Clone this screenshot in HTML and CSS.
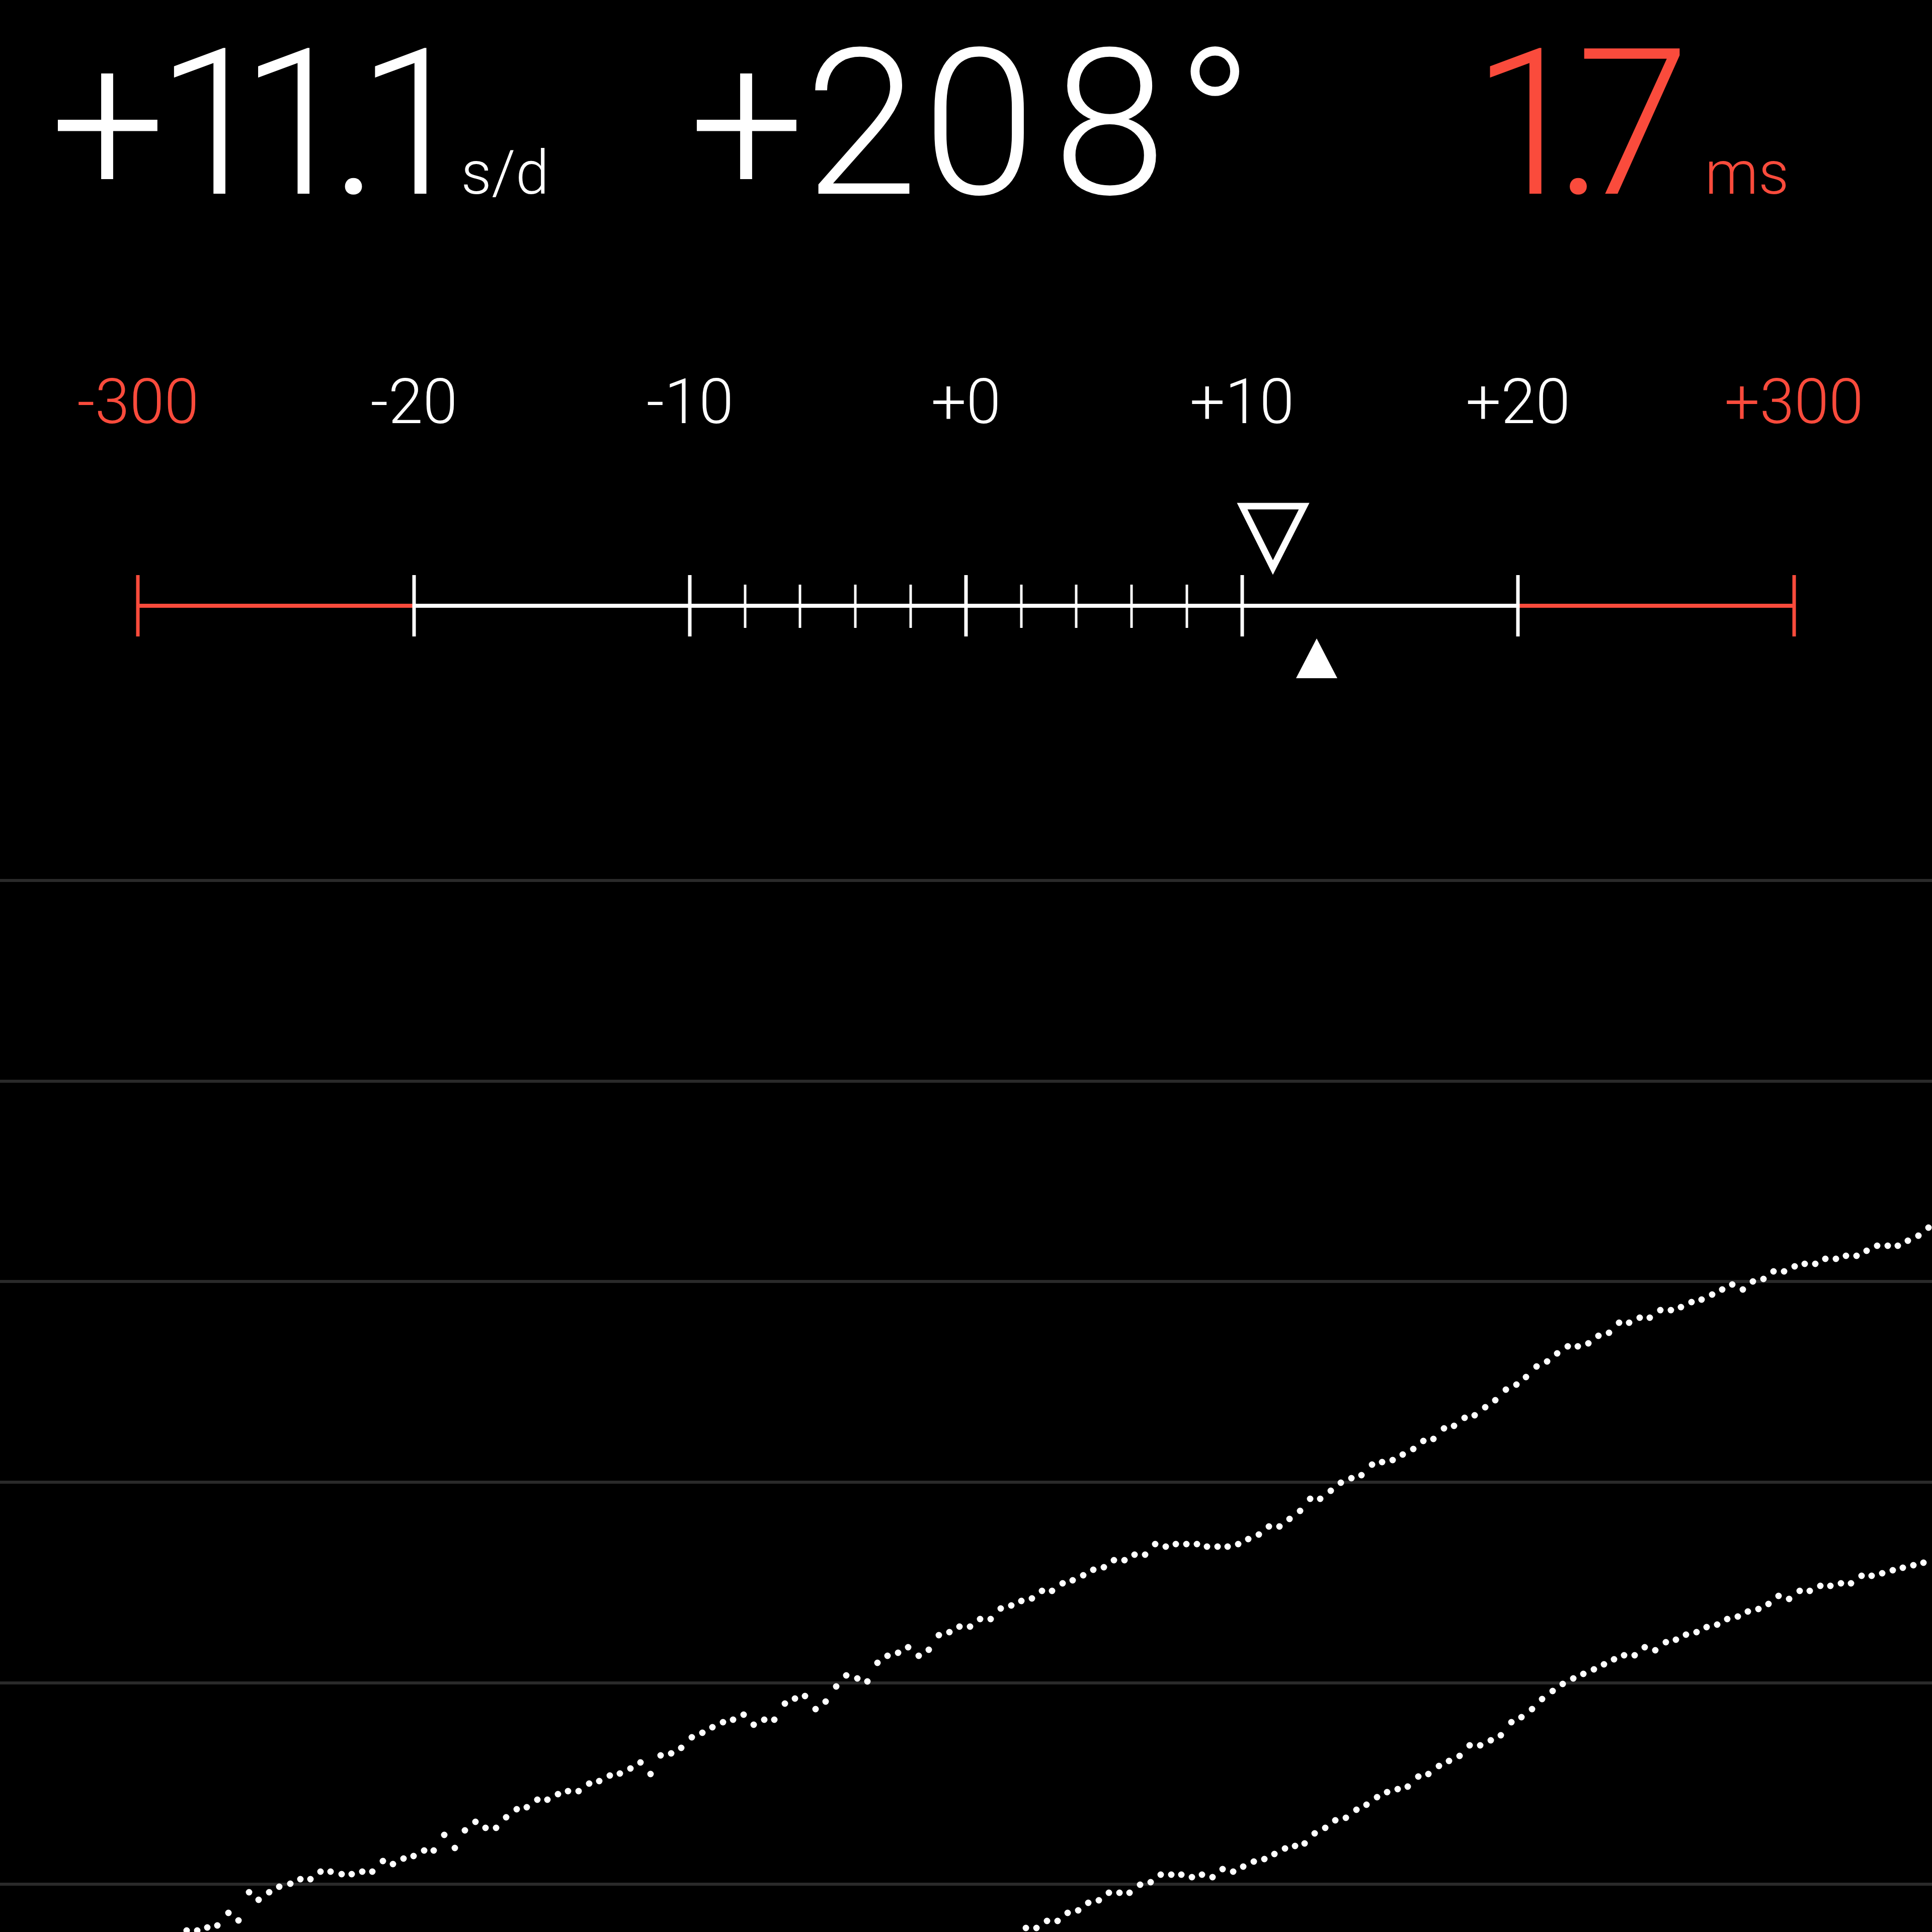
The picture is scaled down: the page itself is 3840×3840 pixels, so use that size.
FILE: index.html
```html
<!DOCTYPE html>
<html lang="en">
<head>
<meta charset="utf-8">
<title>Timegrapher</title>
<link rel="stylesheet" href="styles.css">
</head>
<body>
<main class="screen">
  <section class="readouts">
    <div class="readout rate"><span class="num"><span class="p">+</span><span class="a">1</span><span class="b">1</span><span class="d">.</span><span class="e">1</span></span><span class="unit">s/d</span></div>
    <div class="readout amp"><span class="num">+<span class="a">2</span><span class="b">0</span><span class="c">8</span>°</span></div>
    <div class="readout beat warn"><span class="num"><span class="a">1</span><span class="d">.</span>7</span><span class="unit">ms</span></div>
  </section>
  <section class="labels">
    <span class="lbl warn">-300</span>
    <span class="lbl">-20</span>
    <span class="lbl">-10</span>
    <span class="lbl">+0</span>
    <span class="lbl">+10</span>
    <span class="lbl">+20</span>
    <span class="lbl warn">+300</span>
  </section>
  <svg class="ruler" viewBox="0 990 3840 380" xmlns="http://www.w3.org/2000/svg">
    <g class="axis">
      <line class="red" x1="274" y1="1204" x2="823" y2="1204"/>
      <line class="white" x1="823" y1="1204" x2="3017" y2="1204"/>
      <line class="red" x1="3017" y1="1204" x2="3566" y2="1204"/>
    </g>
    <g class="big-ticks">
      <line class="red" x1="274" y1="1143" x2="274" y2="1265"/>
      <line class="white" x1="823" y1="1143" x2="823" y2="1265"/>
      <line class="white" x1="1371" y1="1143" x2="1371" y2="1265"/>
      <line class="white" x1="1920" y1="1143" x2="1920" y2="1265"/>
      <line class="white" x1="2469" y1="1143" x2="2469" y2="1265"/>
      <line class="white" x1="3017" y1="1143" x2="3017" y2="1265"/>
      <line class="red" x1="3566" y1="1143" x2="3566" y2="1265"/>
    </g>
    <g class="small-ticks">
      <line x1="1481" y1="1162" x2="1481" y2="1248"/>
      <line x1="1590" y1="1162" x2="1590" y2="1248"/>
      <line x1="1700" y1="1162" x2="1700" y2="1248"/>
      <line x1="1810" y1="1162" x2="1810" y2="1248"/>
      <line x1="2030" y1="1162" x2="2030" y2="1248"/>
      <line x1="2139" y1="1162" x2="2139" y2="1248"/>
      <line x1="2249" y1="1162" x2="2249" y2="1248"/>
      <line x1="2359" y1="1162" x2="2359" y2="1248"/>
    </g>
    <polygon class="marker-hollow" points="2469,1006 2592,1006 2530,1128"/>
    <polygon class="marker-solid" points="2576,1348 2658,1348 2617,1269"/>
  </svg>
  <svg class="chart" viewBox="0 1700 3840 2140" xmlns="http://www.w3.org/2000/svg">
    <g class="grid">
      <line x1="0" y1="1750" x2="3840" y2="1750"/>
      <line x1="0" y1="2149" x2="3840" y2="2149"/>
      <line x1="0" y1="2547" x2="3840" y2="2547"/>
      <line x1="0" y1="2946" x2="3840" y2="2946"/>
      <line x1="0" y1="3345" x2="3840" y2="3345"/>
      <line x1="0" y1="3745" x2="3840" y2="3745"/>
    </g>
    <path class="dots" d="M371 3837h0M392 3837h0M412 3831h0M432 3827h0M454 3802h0M474 3817h0M495 3761h0M514 3776h0M535 3761h0M555 3750h0M577 3744h0M597 3735h0M617 3735h0M637 3720h0M657 3720h0M679 3725h0M699 3725h0M720 3720h0M740 3720h0M761 3699h0M781 3705h0M802 3694h0M822 3689h0M843 3678h0M862 3678h0M883 3647h0M904 3673h0M924 3638h0M945 3621h0M965 3633h0M986 3633h0M1006 3612h0M1027 3596h0M1047 3592h0M1068 3577h0M1088 3577h0M1109 3566h0M1129 3560h0M1150 3560h0M1171 3545h0M1191 3540h0M1212 3529h0M1232 3525h0M1253 3515h0M1273 3503h0M1293 3526h0M1313 3489h0M1334 3485h0M1354 3474h0M1375 3453h0M1396 3444h0M1416 3433h0M1437 3423h0M1457 3418h0M1478 3408h0M1498 3428h0M1519 3418h0M1539 3418h0M1560 3386h0M1580 3376h0M1600 3371h0M1621 3397h0M1641 3382h0M1662 3352h0M1682 3330h0M1704 3336h0M1724 3342h0M1744 3305h0M1764 3291h0M1785 3285h0M1805 3274h0M1826 3291h0M1846 3279h0M1866 3250h0M1887 3244h0M1907 3233h0M1928 3233h0M1948 3218h0M1969 3218h0M1989 3197h0M2010 3191h0M2030 3182h0M2051 3177h0M2071 3162h0M2091 3162h0M2112 3147h0M2132 3141h0M2153 3131h0M2173 3120h0M2194 3115h0M2214 3101h0M2235 3101h0M2255 3090h0M2276 3090h0M2296 3069h0M2317 3074h0M2337 3069h0M2358 3069h0M2379 3069h0M2399 3074h0M2420 3074h0M2440 3074h0M2461 3069h0M2481 3059h0M2502 3050h0M2522 3034h0M2543 3034h0M2563 3019h0M2584 3003h0M2604 2979h0M2624 2979h0M2645 2963h0M2665 2947h0M2686 2938h0M2706 2932h0M2727 2911h0M2747 2906h0M2768 2902h0M2788 2891h0M2809 2880h0M2829 2864h0M2849 2860h0M2870 2839h0M2890 2834h0M2911 2818h0M2931 2813h0M2952 2797h0M2972 2783h0M2993 2762h0M3014 2752h0M3033 2737h0M3054 2716h0M3075 2706h0M3095 2690h0M3116 2676h0M3136 2676h0M3157 2670h0M3177 2655h0M3198 2649h0M3218 2629h0M3238 2629h0M3259 2619h0M3279 2619h0M3300 2604h0M3321 2604h0M3341 2598h0M3362 2588h0M3382 2583h0M3403 2573h0M3423 2563h0M3443 2553h0M3464 2563h0M3484 2547h0M3505 2542h0M3525 2527h0M3546 2527h0M3567 2517h0M3587 2512h0M3608 2512h0M3628 2502h0M3649 2502h0M3669 2496h0M3690 2496h0M3710 2486h0M3731 2476h0M3752 2476h0M3772 2476h0M3792 2466h0M3813 2456h0M3833 2440h0"/>
    <path class="dots" d="M2039 3832h0M2060 3832h0M2081 3818h0M2102 3818h0M2122 3802h0M2143 3797h0M2163 3782h0M2184 3777h0M2204 3762h0M2225 3762h0M2245 3762h0M2266 3746h0M2287 3741h0M2307 3726h0M2328 3726h0M2348 3726h0M2369 3731h0M2389 3726h0M2410 3731h0M2430 3715h0M2451 3720h0M2471 3710h0M2492 3700h0M2513 3695h0M2533 3685h0M2554 3674h0M2574 3669h0M2593 3664h0M2613 3644h0M2634 3633h0M2654 3618h0M2675 3613h0M2696 3597h0M2716 3587h0M2737 3572h0M2757 3562h0M2778 3556h0M2798 3551h0M2819 3531h0M2839 3526h0M2860 3510h0M2880 3500h0M2901 3490h0M2921 3469h0M2942 3469h0M2963 3459h0M2983 3449h0M3004 3423h0M3024 3413h0M3045 3397h0M3065 3377h0M3086 3361h0M3106 3347h0M3127 3336h0M3147 3327h0M3168 3318h0M3188 3308h0M3208 3298h0M3228 3290h0M3249 3290h0M3269 3274h0M3290 3280h0M3311 3264h0M3331 3259h0M3351 3249h0M3372 3244h0M3392 3234h0M3413 3229h0M3433 3218h0M3454 3213h0M3474 3203h0M3495 3198h0M3515 3188h0M3535 3172h0M3556 3178h0M3577 3162h0M3597 3162h0M3618 3152h0M3638 3152h0M3659 3147h0M3679 3147h0M3700 3132h0M3720 3132h0M3741 3127h0M3762 3121h0M3782 3116h0M3803 3111h0M3823 3106h0"/>
  </svg>
</main>
</body>
</html>
```

FILE: styles.css
```css
html, body {
  margin: 0;
  padding: 0;
  background: #000;
}

.screen {
  width: 3840px;
  height: 3840px;
  overflow: hidden;
  display: flex;
  flex-direction: column;
  background: #000;
  color: #fff;
  font-family: Roboto, "Liberation Sans", sans-serif;
}

.warn {
  color: #fa4b3c;
}

/* Top readouts */
.readouts {
  flex: none;
  height: 740px;
  box-sizing: border-box;
  padding: 43px 0 0 100px;
  display: grid;
  grid-template-columns: 1270px 1556px auto;
  align-items: baseline;
  align-content: start;
}

.readout {
  white-space: nowrap;
}

.num {
  font-size: 406px;
  font-weight: 300;
  line-height: 406px;
}

.unit {
  font-size: 120px;
  font-weight: 300;
  margin-left: 30px;
}

/* per-glyph spacing so the proportional figures sit as in the original */
.rate .p { letter-spacing: -19px; }
.rate .a { letter-spacing: -58px; }
.rate .b { letter-spacing: -46px; }
.rate .d { letter-spacing: -44px; }
.rate .e { letter-spacing: -49px; }

.amp .a { letter-spacing: 9px; }
.amp .b { letter-spacing: 34px; }
.amp .c { letter-spacing: 20px; }

.beat .a { letter-spacing: -60px; }
.beat .d { letter-spacing: -55px; }

/* Scale labels */
.labels {
  flex: none;
  height: 250px;
  display: grid;
  grid-template-columns: repeat(7, 1fr);
  text-align: center;
  font-size: 124px;
  font-weight: 300;
  line-height: 124px;
  margin-top: -3px;
}

/* Ruler */
.ruler {
  flex: none;
  display: block;
  width: 3840px;
  height: 380px;
  margin-top: 3px;
}

.ruler line {
  stroke-linecap: butt;
}

.ruler .white {
  stroke: #fff;
}

.ruler .red {
  stroke: #fa4b3c;
}

.axis line {
  stroke-width: 8;
}

.big-ticks line {
  stroke-width: 7;
}

.small-ticks line {
  stroke: #fff;
  stroke-width: 5;
}

.marker-hollow {
  fill: none;
  stroke: #fff;
  stroke-width: 13;
  stroke-linejoin: miter;
  stroke-miterlimit: 10;
}

.marker-solid {
  fill: #fff;
}

/* Chart */
.chart {
  flex: none;
  display: block;
  width: 3840px;
  height: 2140px;
  margin-top: 330px;
}

.grid line {
  stroke: #2a2a2a;
  stroke-width: 6;
}

.dots {
  fill: none;
  stroke: #fff;
  stroke-width: 13;
  stroke-linecap: round;
}
```
